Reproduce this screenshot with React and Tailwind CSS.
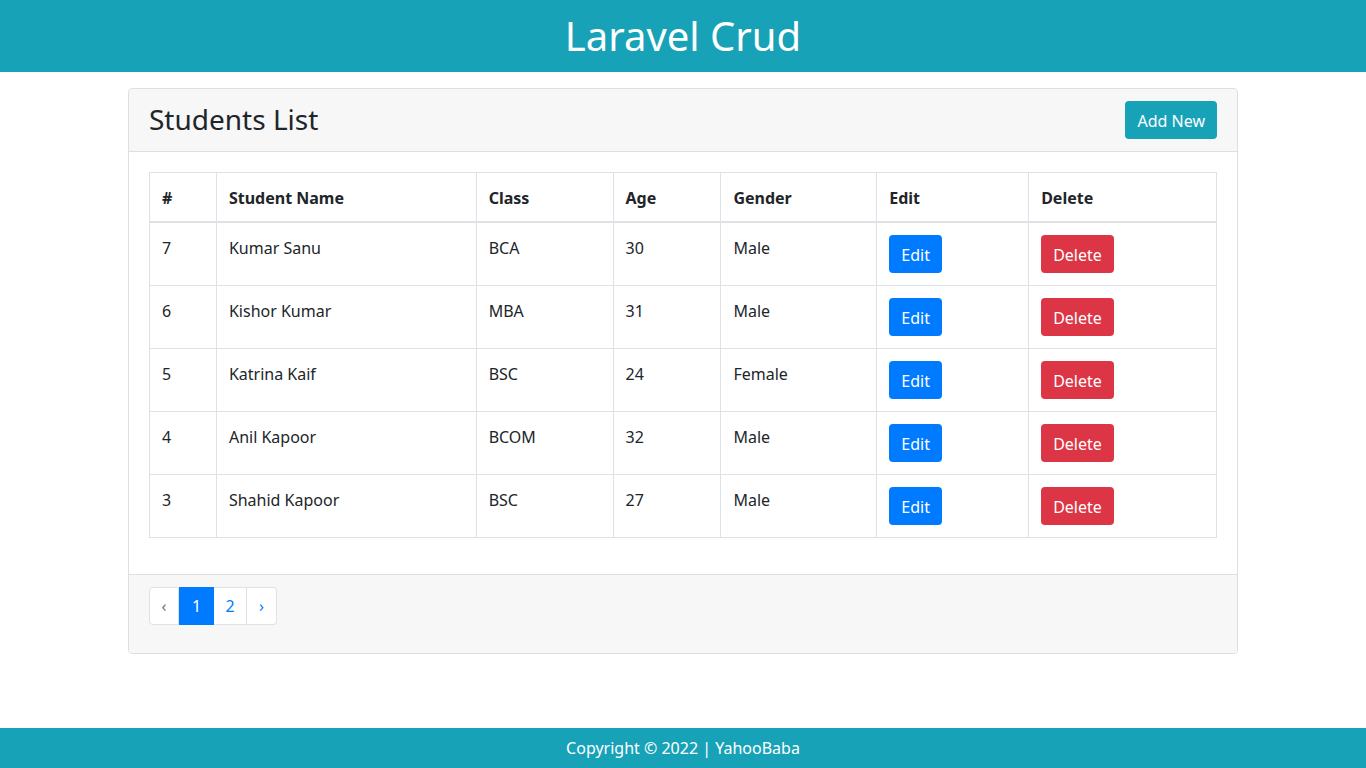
const students = [
  { id: 7, name: "Kumar Sanu", cls: "BCA", age: 30, gender: "Male" },
  { id: 6, name: "Kishor Kumar", cls: "MBA", age: 31, gender: "Male" },
  { id: 5, name: "Katrina Kaif", cls: "BSC", age: 24, gender: "Female" },
  { id: 4, name: "Anil Kapoor", cls: "BCOM", age: 32, gender: "Male" },
  { id: 3, name: "Shahid Kapoor", cls: "BSC", age: 27, gender: "Male" },
];

const cell = "border border-[#dee2e6] px-3 pt-[13px] pb-[11px] align-top text-left";

export default function App() {
  return (
    <div className="min-h-[768px] flex flex-col bg-white text-[#212529] font-['Noto_Sans',sans-serif] text-base leading-6">
      {/* ── Header ── */}
      <header className="h-[72px] bg-[#17a2b8] flex items-center justify-center">
        <h1 className="text-white text-[40px] leading-[1.2] font-normal">Laravel Crud</h1>
      </header>

      {/* ── Card ── */}
      <main className="flex-1 pt-4">
        <div className="w-[1110px] mx-auto border border-[#dfdfdf] rounded bg-white">
          <div className="bg-[#f7f7f7] border-b border-[#dfdfdf] px-5 py-3 flex items-center justify-between rounded-t">
            <h3 className="text-[28px] leading-[1.2] font-normal">Students List</h3>
            <button className="h-[38px] px-3 pt-px rounded bg-[#17a2b8] text-white text-base">Add New</button>
          </div>

          <div className="p-5">
            <table className="w-full mb-4 border-collapse">
              <colgroup>
                <col className="w-[67px]" />
                <col className="w-[260px]" />
                <col className="w-[137px]" />
                <col className="w-[108px]" />
                <col className="w-[156px]" />
                <col className="w-[152px]" />
                <col className="w-[188px]" />
              </colgroup>
              <thead>
                <tr>
                  {["#", "Student Name", "Class", "Age", "Gender", "Edit", "Delete"].map((h) => (
                    <th key={h} className={`${cell} border-b-2 font-bold`}>{h}</th>
                  ))}
                </tr>
              </thead>
              <tbody>
                {students.map((s) => (
                  <tr key={s.id}>
                    <td className={cell}>{s.id}</td>
                    <td className={cell}>{s.name}</td>
                    <td className={cell}>{s.cls}</td>
                    <td className={cell}>{s.age}</td>
                    <td className={cell}>{s.gender}</td>
                    <td className="border border-[#dee2e6] px-3 py-3 align-top">
                      <button className="h-[38px] px-3 pt-px rounded bg-[#007bff] text-white">Edit</button>
                    </td>
                    <td className="border border-[#dee2e6] px-3 py-3 align-top">
                      <button className="h-[38px] px-3 pt-px rounded bg-[#dc3545] text-white">Delete</button>
                    </td>
                  </tr>
                ))}
              </tbody>
            </table>
          </div>

          <div className="bg-[#f7f7f7] border-t border-[#dfdfdf] px-5 py-3 rounded-b">
            <nav className="flex mb-4">
              <span className="h-[38px] w-[30px] flex items-center justify-center border border-[#dee2e6] rounded-l text-[#6c757d] bg-white">‹</span>
              <span className="h-[38px] w-[35px] flex items-center justify-center border border-[#007bff] bg-[#007bff] text-white">1</span>
              <span className="h-[38px] w-[33px] flex items-center justify-center border border-[#dee2e6] border-l-0 bg-white text-[#007bff]">2</span>
              <span className="h-[38px] w-[30px] flex items-center justify-center border border-[#dee2e6] border-l-0 rounded-r bg-white text-[#007bff]">›</span>
            </nav>
          </div>
        </div>
      </main>

      {/* ── Footer ── */}
      <footer className="h-10 bg-[#17a2b8] flex items-center justify-center text-white text-base">
        Copyright © 2022 | YahooBaba
      </footer>
    </div>
  );
}
